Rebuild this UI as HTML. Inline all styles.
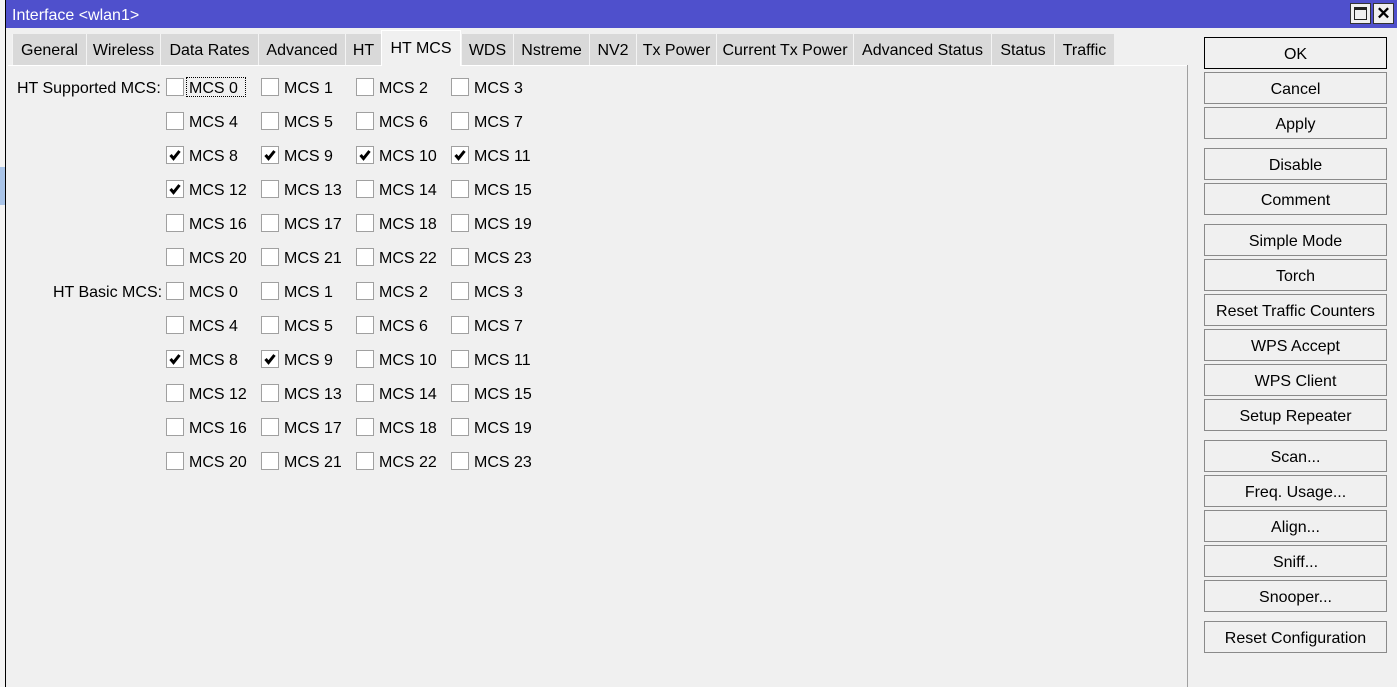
<!DOCTYPE html>
<html><head><meta charset="utf-8"><style>
*{margin:0;padding:0;box-sizing:border-box}
body{width:1397px;height:687px;overflow:hidden;background:#f0f0f0;font-family:"Liberation Sans",Arial,sans-serif;font-size:16px;color:#000;position:relative}
.a{position:absolute}
.tab{position:absolute;top:34px;height:31px;background:#d9d9d9;border-left:1px solid #f4f4f4;text-align:center;line-height:34px;white-space:nowrap}
.cb{position:absolute;width:18px;height:18px;border:1px solid #a0a0a0;background:#fff}
.lb{position:absolute;line-height:18px;white-space:nowrap}
.btn{position:absolute;left:1204px;width:183px;height:32px;border:1px solid #8a8a8a;background:#f0f0f0;text-align:center;line-height:33px}
</style></head><body>
<div class="a" style="left:0;top:0;width:5px;height:687px;background:#f4f4f4"></div>
<div class="a" style="left:0;top:167px;width:5px;height:38px;background:#a9c4e8"></div>
<div class="a" style="left:5px;top:0;width:1px;height:687px;background:#000"></div>
<div class="a" style="left:6px;top:0;width:1391px;height:28px;background:#4f50cc"></div>
<div class="a" style="left:12px;top:7px;color:#fff;font-size:16px">Interface &lt;wlan1&gt;</div>
<div class="a" style="left:1350px;top:3px;width:21px;height:21px;background:#f0f0f0;border:1px solid #333">
 <div class="a" style="left:3px;top:3px;width:13px;height:13px;border:1.5px solid #222;border-top-width:3px"></div></div>
<div class="a" style="left:1373px;top:3px;width:21px;height:21px;background:#f0f0f0;border:1px solid #333;text-align:center;line-height:19px;font-size:17px;font-weight:bold">✕</div>
<div class="tab" style="left:12px;width:74px">General</div>
<div class="tab" style="left:86px;width:74px">Wireless</div>
<div class="tab" style="left:160px;width:98px">Data Rates</div>
<div class="tab" style="left:258px;width:87px">Advanced</div>
<div class="tab" style="left:345px;width:36px">HT</div>
<div class="tab" style="left:381px;top:30px;height:36px;width:80px;background:#f0f0f0;border:1px solid #fff;border-bottom:none;line-height:35px;z-index:2">HT MCS</div>
<div class="tab" style="left:461px;width:52px">WDS</div>
<div class="tab" style="left:513px;width:76px">Nstreme</div>
<div class="tab" style="left:589px;width:47px">NV2</div>
<div class="tab" style="left:636px;width:80px">Tx Power</div>
<div class="tab" style="left:716px;width:137px">Current Tx Power</div>
<div class="tab" style="left:853px;width:138px">Advanced Status</div>
<div class="tab" style="left:991px;width:63px">Status</div>
<div class="tab" style="left:1054px;width:60px">Traffic</div>
<div class="a" style="left:8px;top:65px;width:1180px;height:1px;background:#fff"></div>
<div class="a" style="left:1187px;top:65px;width:1px;height:622px;background:#a0a0a0"></div>
<div class="lb" style="left:17px;top:80px">HT Supported MCS:</div>
<div class="lb" style="left:53px;top:284px">HT Basic MCS:</div>
<div id="g"></div>
<div class="a" style="left:186px;top:77px;width:60px;height:20px;border:1px dotted #000"></div>
<div class="btn" style="top:37px;border:1px solid #000">OK</div>
<div class="btn" style="top:72px">Cancel</div>
<div class="btn" style="top:107px">Apply</div>
<div class="btn" style="top:148px">Disable</div>
<div class="btn" style="top:183px">Comment</div>
<div class="btn" style="top:224px">Simple Mode</div>
<div class="btn" style="top:259px">Torch</div>
<div class="btn" style="top:294px">Reset Traffic Counters</div>
<div class="btn" style="top:329px">WPS Accept</div>
<div class="btn" style="top:364px">WPS Client</div>
<div class="btn" style="top:399px">Setup Repeater</div>
<div class="btn" style="top:440px">Scan...</div>
<div class="btn" style="top:475px">Freq. Usage...</div>
<div class="btn" style="top:510px">Align...</div>
<div class="btn" style="top:545px">Sniff...</div>
<div class="btn" style="top:580px">Snooper...</div>
<div class="btn" style="top:621px">Reset Configuration</div>
<script>
var checked={"2-0":1,"2-1":1,"2-2":1,"2-3":1,"3-0":1,"8-0":1,"8-1":1};
var xs=[166,261,356,451],h="";
for(var r=0;r<12;r++){var y=78+r*34;for(var c=0;c<4;c++){var n=(r%6)*4+c;var x=xs[c];
h+='<div class="cb" style="left:'+x+'px;top:'+y+'px">'+(checked[r+"-"+c]?'<svg width="16" height="16" style="position:absolute;left:0;top:0"><path d="M3.5 8 L6.5 11.5 L12.5 4" stroke="#000" stroke-width="3" fill="none"/></svg>':'')+'</div>';
h+='<div class="lb" style="left:'+(x+23)+'px;top:'+(y+2)+'px">MCS '+n+'</div>';}}
document.getElementById("g").innerHTML=h;
</script>
</body></html>
